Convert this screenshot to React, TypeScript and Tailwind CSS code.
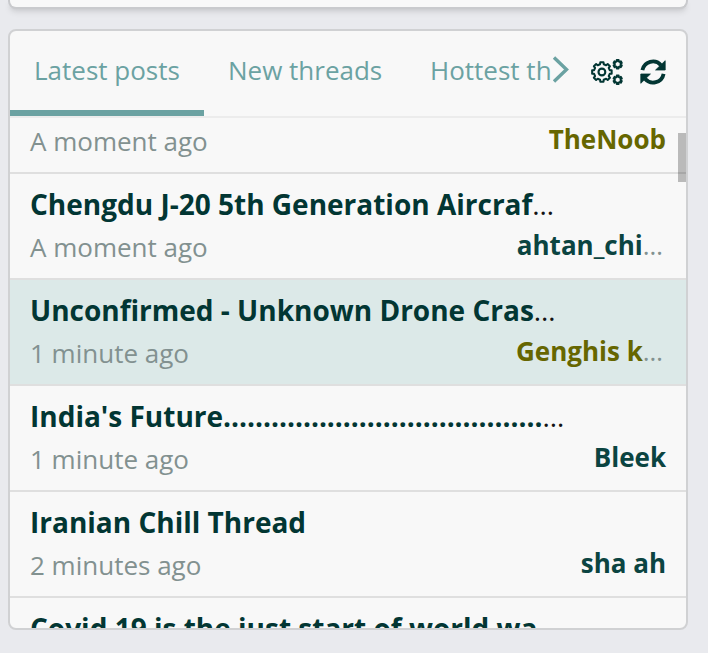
type Post = {
  title?: string;
  time: string;
  author?: string;
  cut?: boolean;
  authorCut?: boolean;
  gold?: boolean;
  active?: boolean;
};

const posts: Post[] = [
  { time: "A moment ago", author: "TheNoob", gold: true },
  { title: "Chengdu J-20 5th Generation Aircraf", cut: true, time: "A moment ago", author: "ahtan_chi", authorCut: true },
  { title: "Unconfirmed - Unknown Drone Cras", cut: true, time: "1 minute ago", author: "Genghis k", authorCut: true, gold: true, active: true },
  { title: "India's Future........................................", cut: true, time: "1 minute ago", author: "Bleek" },
  { title: "Iranian Chill Thread", time: "2 minutes ago", author: "sha ah" },
];

// closed outline of a cog, corners are rounded by stroke-linejoin
function cogPath(cx: number, cy: number, teeth: number, inner: number, outer: number, offset: number) {
  const step = (Math.PI * 2) / teeth;
  const points: string[] = [];
  for (let i = 0; i < teeth; i++) {
    const a = i * step + offset;
    [
      [a - step * 0.29, inner],
      [a - step * 0.21, outer],
      [a + step * 0.21, outer],
      [a + step * 0.29, inner],
    ].forEach(([angle, r]) => {
      points.push(`${(cx + Math.cos(angle) * r).toFixed(2)} ${(cy + Math.sin(angle) * r).toFixed(2)}`);
    });
  }
  return `M${points.join("L")}Z`;
}

function CogsIcon() {
  return (
    <svg width="34" height="28" viewBox="0 0 34 28" fill="none" stroke="#023633" strokeLinejoin="round">
      <path d={cogPath(11.9, 14, 8, 8, 9.9, 0)} strokeWidth="2" />
      <circle cx="11.9" cy="14" r="3.4" strokeWidth="2.1" />
      <path d={cogPath(27.7, 6.2, 6, 3, 4.3, Math.PI / 6)} strokeWidth="2" />
      <path d={cogPath(27.7, 21.8, 6, 3, 4.3, Math.PI / 6)} strokeWidth="2" />
    </svg>
  );
}

function RefreshIcon() {
  return (
    <svg className="ml-4 mt-[28px] size-[26px] shrink-0" viewBox="0 0 26 26" fill="none" stroke="#023633" strokeWidth="3.8">
      <path d="M2.400 11.200A10.700 10.700 0 0 1 21 6.200" />
      <path d="M23.600 14.800A10.700 10.700 0 0 1 5 19.800" />
      <path d="M25.200 1.700V11H15.600ZM0.800 24.300V15H10.400Z" fill="#023633" strokeWidth="0.8" strokeLinejoin="round" />
    </svg>
  );
}

function PostTitle({ title, cut }: { title?: string; cut?: boolean }) {
  return (
    <div className="h-[41px] whitespace-nowrap text-[28px] leading-[36px] text-[#141414]">
      <span className="font-bold text-[#023633]">{title}</span>
      {cut && "…"}
    </div>
  );
}

function PostRow({ post }: { post: Post }) {
  return (
    <li className={`h-[106px] border-b-2 border-[#dfdfdf] px-5 pt-3 ${post.active ? "bg-[#dce9e8]" : ""}`}>
      <PostTitle title={post.title} cut={post.cut} />
      <div className="flex justify-between whitespace-nowrap text-[26px] leading-[36px] text-[#829190]">
        <span className="pt-0.5">{post.time}</span>
        <span className={post.authorCut ? "pr-[3px]" : ""}>
          <span className={post.gold ? "font-bold text-[#666600]" : "font-bold text-[#0b4441]"}>{post.author}</span>
          {post.authorCut && "…"}
        </span>
      </div>
    </li>
  );
}

export default function App() {
  return (
    <div className="h-[653px] w-[708px] overflow-hidden bg-[#e9eaee] px-2 font-['Open_Sans',sans-serif]">
      <div className="h-[9px] w-[680px] rounded-b-lg border-2 border-t-0 border-[#c9cacd] bg-[#f8f8f8] shadow-md" />

      <section className="relative mt-5 flex h-[601px] w-[680px] flex-col overflow-hidden rounded-lg border-2 border-[#d0d1d3] bg-[#f8f8f8]">
        <header className="flex h-[87px] shrink-0 border-b-2 border-[#ececec] text-[26px] leading-[36px] text-[#6ba2a2]">
          <nav className="flex w-[541px] overflow-hidden whitespace-nowrap">
            <div className="w-[194px] shrink-0 border-b-6 border-[#6ba2a2] pl-6 pt-[21px]">Latest posts</div>
            <div className="w-[202px] shrink-0 pl-6 pt-[21px]">New threads</div>
            <div className="shrink-0 pl-6 pt-[21px]">Hottest th</div>
          </nav>
          <svg className="mt-6 shrink-0" width="20" height="30" viewBox="0 0 20 30" fill="none" stroke="#6ba2a2" strokeWidth="3.4">
            <path d="M3 2.500L15.500 14.500L3 26.500" />
          </svg>
          <div className="ml-[19px] mt-[27px]">
            <CogsIcon />
          </div>
          <RefreshIcon />
        </header>

        <div className="min-h-0 flex-1 overflow-hidden">
          <ul className="-mt-[50px]">
            {posts.map((post, i) => (
              <PostRow key={i} post={post} />
            ))}
            <li className="px-5 pt-3">
              <PostTitle title="Covid 19 is the just start of world wa" />
            </li>
          </ul>
        </div>
        <div className="absolute right-0 top-[102px] h-[49px] w-2 bg-black/25" />
      </section>
    </div>
  );
}
